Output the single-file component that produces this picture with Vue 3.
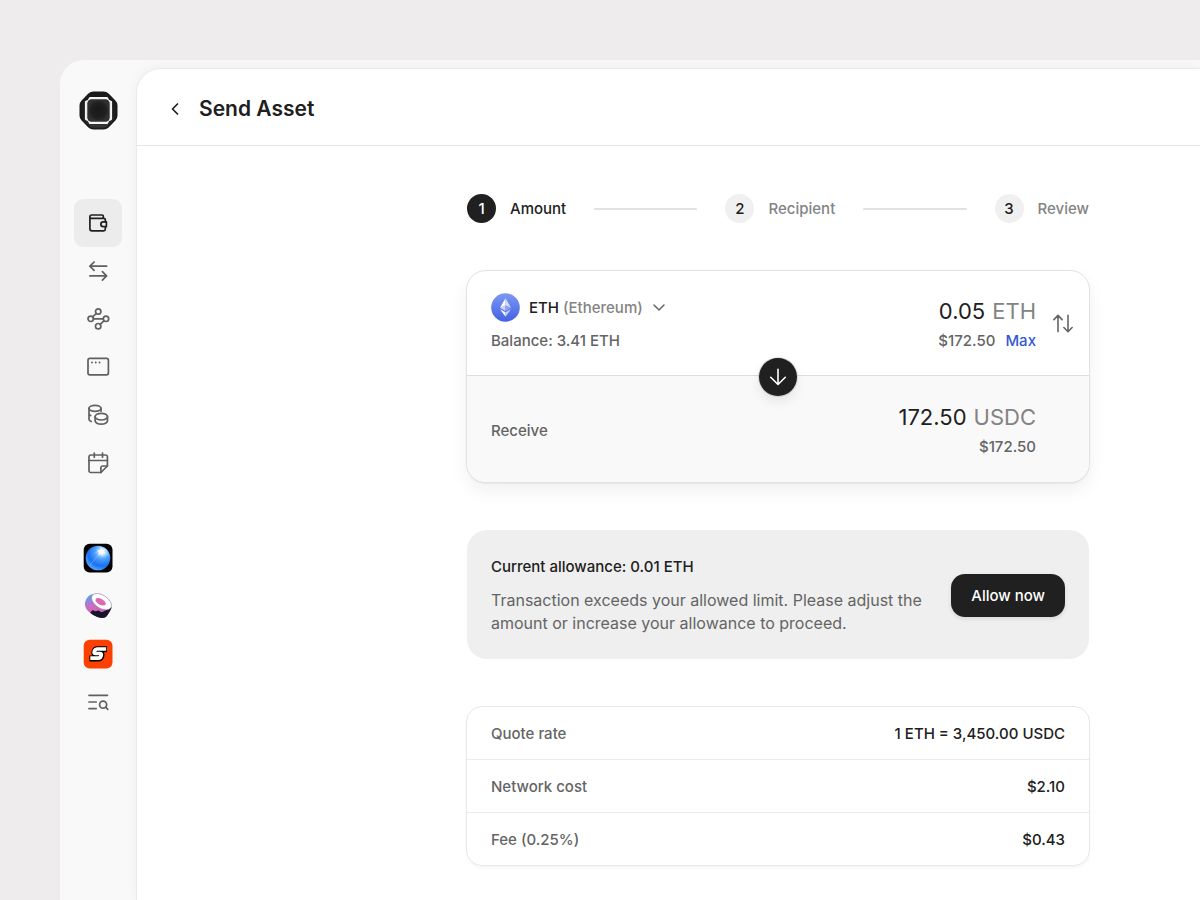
<script setup>
import { ref } from 'vue'

const active = ref('Wallet')
const amount = ref('0.05')

const nav = ['Wallet', 'Transfers', 'Network', 'Windows', 'Tokens', 'Calendar']

const steps = [
  { n: 1, label: 'Amount', current: true },
  { n: 2, label: 'Recipient', current: false },
  { n: 3, label: 'Review', current: false },
]

const rows = [
  { label: 'Quote rate', value: '1 ETH = 3,450.00 USDC' },
  { label: 'Network cost', value: '$2.10' },
  { label: 'Fee (0.25%)', value: '$0.43' },
]
</script>

<template>
  <div class="page">
    <div class="shell">
      <aside class="sidebar">
        <a href="#" class="logo" aria-label="Home">
          <svg width="39" height="39" viewBox="0 0 39 39">
            <defs>
              <radialGradient id="coreFill"><stop offset="0" stop-color="#181818" /><stop offset=".7" stop-color="#202020" /><stop offset="1" stop-color="#303030" /></radialGradient>
              <linearGradient id="shellFill" x1="0" y1="0" x2="0" y2="1"><stop offset="0" stop-color="#1a1a1a" /><stop offset=".7" stop-color="#202020" /><stop offset="1" stop-color="#3a3a3a" /></linearGradient>
            </defs>
            <path d="M14.500 1.500h10q2.600 0 4.400 1.800l6.800 6.800q1.800 1.800 1.800 4.400v10q0 2.600-1.800 4.400l-6.800 6.800q-1.800 1.800-4.400 1.800h-10q-2.600 0-4.400-1.800l-6.800-6.800q-1.800-1.800-1.800-4.400v-10q0-2.600 1.800-4.400l6.800-6.800q1.800-1.800 4.400-1.800z" fill="url(#shellFill)" stroke="#1b1b1b" stroke-width="2" />
            <path d="M11 6.900h17l1.400 2.700 2.700 1.400v17l-2.700 1.400-1.400 2.700h-17l-1.400-2.700-2.700-1.400v-17l2.700-1.400z" fill="#8a8a8a" stroke="#f4f4f4" stroke-width="2" stroke-linejoin="round" />
            <rect x="8.600" y="8.600" width="21.800" height="21.800" rx="3.500" fill="url(#coreFill)" />
          </svg>
        </a>

        <nav class="nav" aria-label="Main">
          <button v-for="name in nav" :key="name" type="button" class="nav-item" :class="{ active: active === name }" :aria-label="name" @click="active = name">
            <svg width="24" height="24" viewBox="0 0 24 24" fill="none" stroke="currentColor" stroke-width="1.7" stroke-linecap="round" stroke-linejoin="round">
              <template v-if="name === 'Wallet'">
                <path d="M17.300 7.300V5.200a1.200 1.200 0 0 0-1.200-1.200H5.500a1.650 1.650 0 0 0 0 3.300h12.300a1.500 1.500 0 0 1 1.500 1.500v2M3.900 5.600v12.200a2 2 0 0 0 2 2h11.900a1.500 1.500 0 0 0 1.500-1.500v-2" />
                <path d="M17.200 10.900h3.200v4.700h-3.200a2.350 2.350 0 0 1 0-4.700z" />
              </template>
              <template v-else-if="name === 'Transfers'">
                <path d="M20.600 7.200H3.900M8.100 3 3.900 7.200l4.200 4.200M3.900 16.900h16.700M16.400 12.700l4.200 4.200-4.200 4.200" />
              </template>
              <template v-else-if="name === 'Network'">
                <circle cx="12.200" cy="4.500" r="2.700" /><circle cx="4.700" cy="11.800" r="2.700" /><circle cx="20" cy="11.800" r="2.700" /><circle cx="12.200" cy="19.200" r="2.700" />
                <path d="M7.400 11.800h9.900M10.300 6.500l-3.600 3.400M14.200 17.300l3.700-3.500" />
              </template>
              <template v-else-if="name === 'Windows'">
                <rect x="2" y="3.400" width="20.400" height="16.500" rx="1.800" />
                <path d="M5.900 7.500h.1M9.700 7.500h.1M13.500 7.500h.1" stroke-width="1.800" />
              </template>
              <template v-else-if="name === 'Tokens'">
                <ellipse cx="9" cy="5.300" rx="6" ry="3" />
                <path d="M3 5.300v11c0 .9.900 1.700 2.200 2.200M15 5.300v2.900M3 10.800c0 .7.700 1.300 1.700 1.700" />
                <ellipse cx="15.300" cy="13.700" rx="6.200" ry="3.300" />
                <path d="M9.100 13.700v4.100c0 1.800 2.800 3.300 6.200 3.300s6.200-1.500 6.200-3.300v-4.100" />
              </template>
              <template v-else>
                <path d="M14.900 21.500H4.700a1.700 1.700 0 0 1-1.700-1.700V5.700a1.700 1.700 0 0 1 1.700-1.700h15a1.700 1.700 0 0 1 1.700 1.700V15z" />
                <path d="M14.900 21.500v-4.800a1.700 1.700 0 0 1 1.700-1.700h4.800M3 9.500h18.400M8.300 2v4.200M16.500 2v4.200" />
              </template>
            </svg>
          </button>
        </nav>

        <nav class="nav" aria-label="Apps">
          <a href="#" class="nav-item" aria-label="Orb">
            <svg width="30" height="30" viewBox="0 0 30 30">
              <defs>
                <radialGradient id="orbFill" cx=".68" cy=".24" r=".85"><stop offset="0" stop-color="#fff" /><stop offset=".16" stop-color="#b9dcff" /><stop offset=".36" stop-color="#4fa0ff" /><stop offset=".7" stop-color="#1670f2" /><stop offset="1" stop-color="#6bb4ff" /></radialGradient>
              </defs>
              <rect x=".7" y=".7" width="28.800" height="28.800" rx="6" fill="#020202" />
              <circle cx="15" cy="15" r="12.300" fill="url(#orbFill)" />
              <path d="M7 22 18.500 8.500M12 10l7-2 7 4" stroke="#bfe0ff" stroke-opacity=".5" stroke-width=".7" fill="none" />
              <path d="M18.500 4.300l.8 2.700 2.900-.8-1.500 2.500 2.300 1.700-3 .2-.5 3-1.800-2.500-2.800 1 1.200-2.600-2.400-1.700 3.100-.5z" fill="#fff" fill-opacity=".85" />
            </svg>
          </a>
          <a href="#" class="nav-item" aria-label="Roll">
            <svg width="30" height="30" viewBox="0 0 30 30">
              <defs>
                <linearGradient id="rollSide" x1=".2" y1="0" x2=".5" y2="1"><stop offset="0" stop-color="#4ea9ea" /><stop offset=".45" stop-color="#c56fc6" /><stop offset="1" stop-color="#f052a0" /></linearGradient>
              </defs>
              <path d="M9.500 3.300C6 3.600 3.500 7 2.200 11c-1.200 4.500 1.600 8.800 6.600 12s10.700 5.300 13.600 3.300c2-1.400 4.500-6 6.300-9.800z" fill="url(#rollSide)" />
              <path d="M7.300 21.900c1.500-2.700 2.700-3.100 4.300-2s2.100-.9 3.900-.4 2.500 2.400 4.500 1.200 5.700-3.200 8.700-4.200c-1.700 4-4.300 8.400-6.300 9.800-2.900 2-9.300-.1-15.100-4.400z" fill="#15152a" />
              <ellipse cx="18.500" cy="10.700" rx="11.200" ry="6.500" transform="rotate(33 18.500 10.700)" fill="#fff" stroke="#7b6d9c" stroke-width=".5" />
              <ellipse cx="17.600" cy="10.800" rx="5.600" ry="3" transform="rotate(28 17.600 10.800)" fill="#df68b4" />
            </svg>
          </a>
          <a href="#" class="nav-item" aria-label="Swift">
            <svg width="30" height="30" viewBox="0 0 30 30">
              <rect x=".7" y=".7" width="28.800" height="28.800" rx="6" fill="#fc4002" />
              <g fill="none" stroke-linejoin="round">
                <path d="M24 10.300H14.200q-1.700 0-2.300 1.500l-.4 1.100q-.7 1.900 1.300 1.900h4.200q2.100 0 1.400 2l-.4 1q-.6 1.600-2.400 1.600H6.400" stroke="#000" stroke-width="6" />
                <path d="M23.200 10H14q-1.700 0-2.300 1.500l-.4 1.100q-.7 1.900 1.300 1.900h4.200q2.100 0 1.400 2l-.4 1q-.6 1.600-2.400 1.600H7.300" stroke="#fff" stroke-width="3.700" />
              </g>
            </svg>
          </a>
          <button type="button" class="nav-item" aria-label="Search list">
            <svg width="24" height="24" viewBox="0 0 24 24" fill="none" stroke="currentColor" stroke-width="1.700" stroke-linecap="round">
              <path d="M3 5.300h18.500M3 12h7.200M3 18.600h7.200" /><circle cx="17.100" cy="14.700" r="3.500" /><path d="m19.600 17.200 2.200 2.200" />
            </svg>
          </button>
        </nav>
      </aside>

      <main class="panel">
        <header class="header">
          <button type="button" class="back" aria-label="Back">
            <svg width="12" height="14" viewBox="0 0 12 14" fill="none" stroke="currentColor" stroke-width="1.700" stroke-linecap="round" stroke-linejoin="round"><path d="M8.500 2 3.500 7l5 5" /></svg>
          </button>
          <h1>Send Asset</h1>
        </header>

        <div class="content">
          <ol class="steps">
            <li v-for="s in steps" :key="s.n" class="step" :class="{ current: s.current }">
              <span class="num">{{ s.n }}</span><span>{{ s.label }}</span>
            </li>
          </ol>

          <section class="swap" aria-label="Swap amounts">
            <div class="side send">
              <div class="asset">
                <button type="button" class="token" aria-haspopup="listbox">
                  <svg width="29" height="29" viewBox="0 0 29 29">
                    <defs><linearGradient id="coin" x1="0" y1="0" x2="0" y2="1"><stop offset="0" stop-color="#7d98f2" /><stop offset="1" stop-color="#4361e4" /></linearGradient></defs>
                    <circle cx="14.500" cy="14.500" r="14.300" fill="url(#coin)" />
                    <path d="M14.500 5.300v7.100L9 14.800z" fill="#fff" /><path d="M14.500 5.300v7.100l5.500 2.400z" fill="#d5ddfb" />
                    <path d="M14.500 12.400v5.600L9 14.800z" fill="#cbd5fa" /><path d="M14.500 12.400v5.600l5.500-3.200z" fill="#8ea3f1" />
                    <path d="M14.500 19.200v4.600L9 16.200z" fill="#fff" /><path d="M14.500 19.200v4.600l5.500-7.600z" fill="#cbd5fa" />
                  </svg>
                  <span>ETH <span class="muted">(Ethereum)</span></span>
                  <svg class="chev" width="14" height="14" viewBox="0 0 14 14" fill="none" stroke="currentColor" stroke-width="1.500" stroke-linecap="round" stroke-linejoin="round"><path d="m2 4 5 5 5-5" /></svg>
                </button>
                <span class="sub">Balance: 3.41 ETH</span>
              </div>
              <div class="figures">
                <label class="big"><input v-model="amount" type="text" inputmode="decimal" class="amount" aria-label="Amount in ETH" /><span class="unit">ETH</span></label>
                <span class="sub fiat">$172.50 <button type="button" class="max">Max</button></span>
              </div>
              <button type="button" class="flip" aria-label="Switch currency">
                <svg width="20" height="20" viewBox="0 0 20 20" fill="none" stroke="currentColor" stroke-width="1.600" stroke-linecap="round" stroke-linejoin="round"><path d="M5 18.600V2.600M.9 6.600 5 2.400l4.100 4.200M15 2.400v16.100M10.900 14.500l4.100 4.200 4.100-4.200" /></svg>
              </button>
            </div>
            <button type="button" class="arrow" aria-label="Reverse direction">
              <svg width="18" height="18" viewBox="0 0 18 18" fill="none" stroke="currentColor" stroke-width="1.600" stroke-linecap="round" stroke-linejoin="round"><path d="M9 1.200v15M1.700 9.300 9 16.500l7.300-7.200" /></svg>
            </button>
            <div class="side receive">
              <span class="sub">Receive</span>
              <div class="figures">
                <span class="big"><span>172.50</span><span class="unit">USDC</span></span>
                <span class="sub fiat">$172.50</span>
              </div>
            </div>
          </section>

          <section class="allowance">
            <div>
              <h2>Current allowance: 0.01 ETH</h2>
              <p>Transaction exceeds your allowed limit. Please adjust the amount or increase your allowance to proceed.</p>
            </div>
            <button type="button" class="allow">Allow now</button>
          </section>

          <div class="quote">
            <table>
              <tbody>
                <tr v-for="r in rows" :key="r.label"><th scope="row">{{ r.label }}</th><td>{{ r.value }}</td></tr>
              </tbody>
            </table>
          </div>
        </div>
      </main>
    </div>
  </div>
</template>

<style>
body { background: #eeecec; }
</style>

<style scoped>
* { box-sizing: border-box; }
.page {
  display: flex;
  min-height: 100vh;
  padding: 60px 0 0 60px;
  background: #eeecec;
  color: #202020;
  font: 500 15px/24px Inter, "Liberation Sans", sans-serif;
  overflow: hidden;
}
button, input { font: inherit; color: inherit; background: none; border: 0; padding: 0; margin: 0; }
button { cursor: pointer; }
svg { display: block; flex: none; }
h1, h2, p, ol { margin: 0; padding: 0; }
.shell { flex: 1; display: flex; padding-top: 9px; background: #f9f9f9; border-top-left-radius: 24px; }
.sidebar { width: 77px; flex: none; display: flex; flex-direction: column; align-items: center; padding: 22px 1px 0 0; }
.logo { margin-bottom: 69px; }
.nav { display: flex; flex-direction: column; margin-bottom: 47px; }
.nav-item { width: 48px; height: 48px; display: flex; align-items: center; justify-content: center; border-radius: 9px; color: #606060; }
.nav-item.active { background: #ececec; color: #202020; }
.panel {
  flex: 1;
  min-width: 0;
  background: #fff;
  border-top-left-radius: 24px;
  box-shadow: 0 0 0 1px #ebebeb, 0 0 14px rgba(0, 0, 0, 0.06);
}
.header { display: flex; align-items: center; gap: 18px; height: 77px; padding: 3px 32px 0; border-bottom: 1px solid #e6e6e6; }
h1 { font-size: 21px; line-height: 28px; font-weight: 600; }
.content { padding: 48px 110px 34px 329px; }
.steps { display: flex; margin: 0 1px; list-style: none; }
.step { display: flex; align-items: center; gap: 14px; line-height: 26px; color: #838383; }
.step:not(:last-child) { flex: 1 1 auto; }
.step:not(:last-child)::after { content: ""; flex: 1; height: 2px; margin: 0 28px 0 14px; border-radius: 1px; background: #e2e2e2; }
.step.current { color: #202020; }
.num { width: 29px; height: 29px; border-radius: 50%; background: #f0f0f0; color: #202020; line-height: 30px; text-align: center; }
.current .num { background: #202020; color: #fff; }
.swap {
  position: relative;
  margin-top: 47px;
  border: 1px solid #e2e2e2;
  border-radius: 20px;
  background: #fff;
  box-shadow: 0 8px 18px rgba(0, 0, 0, 0.06), 0 1px 1px rgba(0, 0, 0, 0.05);
}
.side { display: flex; align-items: center; justify-content: space-between; padding: 22px 16px 22px 24px; }
.receive { padding: 26px 53px 23px 24px; background: #f9f9f9; border-top: 1px solid #dedede; border-radius: 0 0 19px 19px; }
.asset { display: flex; flex-direction: column; align-items: flex-start; gap: 7px; }
.token { display: flex; align-items: center; gap: 9px; }
.muted { color: #838383; }
.chev { color: #646464; }
.sub { color: #646464; }
.figures { flex: 1; display: flex; flex-direction: column; align-items: flex-end; gap: 3px; padding-top: 3px; }
.receive .figures { padding-top: 0; }
.big { display: flex; gap: 7px; font-size: 22px; line-height: 30px; font-weight: 400; }
.amount { width: 120px; height: 30px; text-align: right; outline: none; }
.unit { color: #838383; }
.fiat { display: flex; gap: 10px; }
.max { color: #3358d4; }
.flip { margin-left: 17px; color: #646464; }
.arrow {
  position: absolute;
  left: 50%;
  top: 50%;
  width: 38px;
  height: 38px;
  transform: translate(-50%, -50%);
  display: flex;
  align-items: center;
  justify-content: center;
  border-radius: 50%;
  background: #202020;
  color: #fff;
  box-shadow: 0 0 0 1px rgba(0, 0, 0, 0.12), 0 6px 12px rgba(0, 0, 0, 0.08);
}
.allowance { display: flex; align-items: center; justify-content: space-between; gap: 24px; margin: 47px 1px 0; padding: 25px 24px 24px; border-radius: 20px; background: #efefef; }
h2 { font-size: 15px; line-height: 24px; font-weight: 500; }
.allowance p { margin-top: 10px; font-size: 16px; line-height: 23px; font-weight: 400; color: #646464; }
.allow { flex: none; height: 43px; padding: 1px 20px 0; border-radius: 14px; background: #202020; color: #fff; box-shadow: 0 2px 4px rgba(0, 0, 0, 0.1); }
.quote { margin-top: 47px; border: 1px solid #e8e8e8; border-radius: 16px; box-shadow: 0 2px 3px rgba(0, 0, 0, 0.04); }
table { width: 100%; border-collapse: separate; border-spacing: 0; }
th, td { height: 53px; padding: 2px 24px 0; font-weight: 500; }
th { text-align: left; color: #646464; }
td { text-align: right; }
tr:not(:last-child) > * { border-bottom: 1px solid #ebebeb; }
tr:last-child > * { height: 52px; }
</style>
